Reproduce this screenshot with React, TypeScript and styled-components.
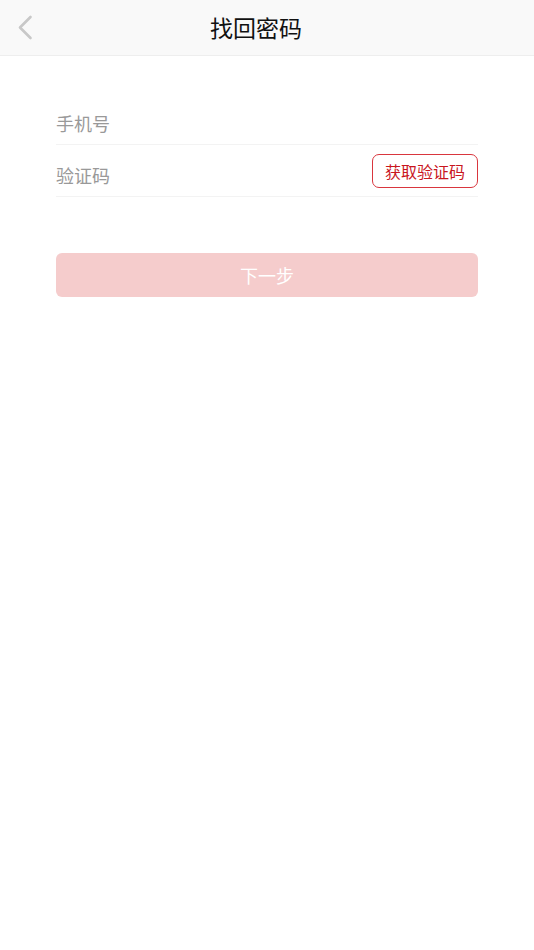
import React from "react";
import styled, { createGlobalStyle } from "styled-components";

const Global = createGlobalStyle`
  html, body { margin: 0; padding: 0; background: #ffffff; }
  body { font-family: "Noto Sans CJK SC", "Noto Sans", sans-serif; }
  * { box-sizing: border-box; }
`;

const Page = styled.div`
  width: 534px;
  min-height: 950px;
  background: #ffffff;
`;

const Header = styled.header`
  height: 56px;
  background: #f9f9f9;
  border-bottom: 1px solid #eeeeee;
  display: flex;
  align-items: center;
  position: relative;
`;

const BackButton = styled.button`
  border: none;
  background: transparent;
  padding: 0;
  margin-left: 14px;
  width: 22px;
  height: 28px;
  display: flex;
  align-items: center;
  justify-content: center;
`;

const Title = styled.h1`
  margin: 0;
  position: absolute;
  left: 210px;
  top: 0;
  height: 55px;
  line-height: 55px;
  font-size: 23px;
  font-weight: 400;
  color: #111111;
`;

const Form = styled.div`
  padding: 37px 56px 0 56px;
  display: flex;
  flex-direction: column;
`;

const Row = styled.div`
  height: 52px;
  display: flex;
  align-items: center;
  justify-content: space-between;
  border-bottom: 1px solid #f3f3f3;
`;

const Label = styled.span`
  font-size: 18px;
  color: #999999;
  margin-top: 8px;
`;

const CodeButton = styled.button`
  height: 34px;
  width: 106px;
  border: 1px solid #d9363e;
  border-radius: 7px;
  background: #ffffff;
  color: #c9161e;
  font-family: "Noto Sans CJK SC", sans-serif;
  font-size: 16px;
  padding: 0;
`;

const NextButton = styled.button`
  margin-top: 56px;
  height: 44px;
  border: none;
  border-radius: 6px;
  background: #f5cccc;
  color: #ffffff;
  font-family: "Noto Sans CJK SC", sans-serif;
  font-size: 18px;
`;

export default function App() {
  return (
    <Page>
      <Global />
      <Header>
        <BackButton aria-label="back">
          <svg width="16" height="26" viewBox="0 0 16 26">
            <path d="M13.5 2 L3 12.5 L13.5 23" fill="none" stroke="#c8c8c8" strokeWidth="2.6" strokeLinecap="round" strokeLinejoin="round" />
          </svg>
        </BackButton>
        <Title>找回密码</Title>
      </Header>
      <Form>
        <Row>
          <Label>手机号</Label>
        </Row>
        <Row>
          <Label>验证码</Label>
          <CodeButton>获取验证码</CodeButton>
        </Row>
        <NextButton>下一步</NextButton>
      </Form>
    </Page>
  );
}
